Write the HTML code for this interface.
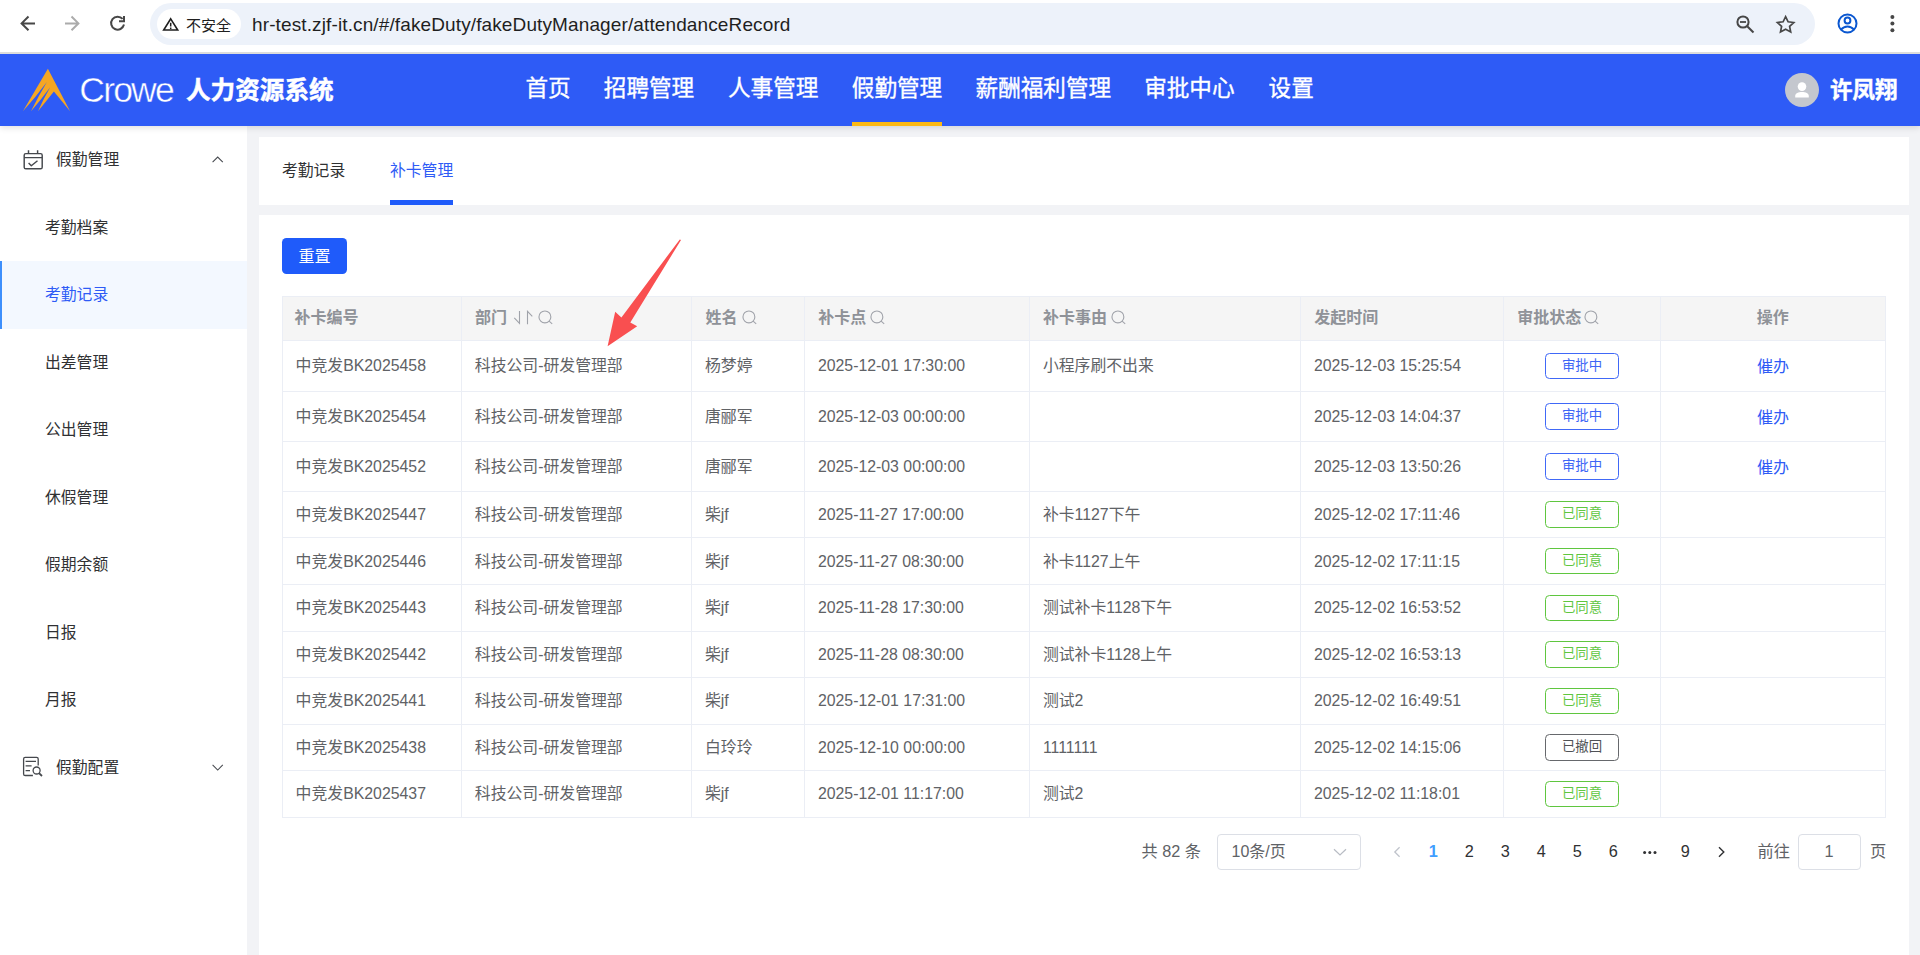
<!DOCTYPE html>
<html lang="zh-CN">
<head>
<meta charset="utf-8">
<title>人力资源系统</title>
<style>
*{box-sizing:border-box;margin:0;padding:0}
html,body{width:1920px;height:955px;overflow:hidden;background:#f2f3f6;font-family:"Liberation Sans","Noto Sans CJK SC",sans-serif;color:#303133}
.abs{position:absolute}
/* browser chrome */
#chrome{position:absolute;left:0;top:0;width:1920px;height:54px;background:#fff;border-bottom:1px solid #e3e3e3}
#chrome .line{position:absolute;left:0;top:52px;width:1920px;height:2px;background:#dcdcdc}
#pill{position:absolute;left:150px;top:3px;width:1665px;height:42px;border-radius:21px;background:#edf2fa}
#chip{position:absolute;left:157px;top:9px;width:84px;height:30px;border-radius:15px;background:#fff}
#chip span{position:absolute;left:29px;top:7px;font-size:15px;line-height:20px;color:#1f1f1f;white-space:nowrap}
#url{position:absolute;left:252px;top:11.5px;letter-spacing:0.12px;font-size:19px;line-height:26px;color:#1f1f1f;white-space:nowrap}
/* header */
#hdr{position:absolute;left:0;top:54px;width:1920px;height:72px;background:#2e5bf6;box-shadow:0 2px 6px rgba(0,0,0,.12)}
#hdr .nav{position:absolute;top:20.3px;-webkit-text-stroke:0.35px #fff;font-size:22.6px;line-height:30px;color:#fff;white-space:nowrap}
#crowe{position:absolute;left:79.3px;top:14px;font-size:35.6px;-webkit-text-stroke:0.45px #2e5bf6;line-height:44px;color:#fff;letter-spacing:-1.85px;white-space:nowrap}
#sysname{position:absolute;left:186px;top:19.5px;-webkit-text-stroke:0.5px #fff;font-size:24.6px;line-height:34px;color:#fff;font-weight:bold;white-space:nowrap}
#uname{position:absolute;left:1830px;top:20.5px;-webkit-text-stroke:0.45px #fff;font-size:22.5px;line-height:32px;color:#fff;font-weight:bold;white-space:nowrap}
#avatar{position:absolute;left:1785px;top:19px;width:34px;height:34px;border-radius:50%;background:#c4c7ce}
#navline{position:absolute;left:852px;top:68px;width:90px;height:4px;background:#fdb913}
/* sidebar */
#side{position:absolute;left:0;top:126px;width:247px;height:829px;background:#fff}
#side .it{position:absolute;left:0;width:247px;height:67.5px;line-height:67.5px;font-size:15.8px;color:#303133;white-space:nowrap}
#side .it span{position:absolute;left:45px;top:-0.2px}
#side .it.top span{left:56px}
#side .act{background:#f3f8ff;color:#2e5bf6 !important;border-left:2px solid #3d8ffc}
#side .act span{left:43px !important}
/* main */
.card{position:absolute;background:#fff}
.tab{position:absolute;top:23px;font-size:15.8px;line-height:22px;white-space:nowrap}
#btn{position:absolute;left:282px;top:238px;width:65px;height:36px;border-radius:4.5px;background:#1f5bfa;color:#fff;font-size:16px;line-height:37.2px;text-align:center}
/* table */
#tbl{position:absolute;left:282px;top:296px;width:1604px;height:521.5px;border:1px solid #ebeef5;background:#fff}
.hd{position:absolute;left:0;top:0;width:1602px;height:43.5px;background:#f5f5f5}
.vl{position:absolute;top:0;width:1px;height:520px;background:#ebeef5}
.hl{position:absolute;left:0;width:1602px;height:1px;background:#ebeef5}
.th{position:absolute;top:10px;font-size:16px;line-height:22px;font-weight:bold;color:#8f9298;white-space:nowrap}
.td{position:absolute;font-size:15.85px;line-height:22px;color:#606266;white-space:nowrap}
.tag{position:absolute;left:1545px;width:74px;height:26.5px;border-radius:4.5px;border:1.3px solid #4068f7;color:#3d65f6;font-size:13.4px;line-height:24.6px;text-align:center;background:#fff}
.tag.g{border-color:#5fc63f;color:#5fc63f}
.tag.k{border-color:#66686c;color:#505256}
.lnk{position:absolute;left:1757px;font-size:16px;line-height:22px;color:#2e5bf6;white-space:nowrap}
/* pagination */
.pg{position:absolute;top:839.2px;font-size:16.25px;line-height:24px;color:#303133;white-space:nowrap}
.pn{width:36px;text-align:center}
.box{position:absolute;top:834px;height:35.5px;border:1px solid #dcdfe6;border-radius:4px;background:#fff}
.ic{display:inline-block;vertical-align:-2px;margin-left:5px;position:relative;left:0.6px;top:1.3px}

</style>
</head>
<body>
<div id="side">
<div class="it top" style="top:0.25px"><span>假勤管理</span></div>
<div class="it " style="top:67.75px"><span>考勤档案</span></div>
<div class="it act" style="top:135.25px"><span>考勤记录</span></div>
<div class="it " style="top:202.75px"><span>出差管理</span></div>
<div class="it " style="top:270.25px"><span>公出管理</span></div>
<div class="it " style="top:337.75px"><span>休假管理</span></div>
<div class="it " style="top:405.25px"><span>假期余额</span></div>
<div class="it " style="top:472.75px"><span>日报</span></div>
<div class="it " style="top:540.25px"><span>月报</span></div>
<div class="it top" style="top:607.75px"><span>假勤配置</span></div>
<svg class="abs" style="left:20px;top:20px" width="26" height="26" viewBox="20 146 26 26">
 <g fill="none" stroke="#45484d" stroke-width="1.45" stroke-linejoin="round" stroke-linecap="butt">
  <rect x="24.2" y="153.6" width="18" height="15.2" rx="1.6"/>
  <path d="M24.2 157.6H42.2M28.5 150.3V153.6M37.6 150.3V153.6M28.6 163L31.3 165.7L37.5 160.8"/>
 </g>
</svg>
<svg class="abs" style="left:208px;top:26px" width="20" height="14" viewBox="208 152 20 14"><path d="M212.6 162.2L217.7 157.1L222.8 162.2" fill="none" stroke="#46494f" stroke-width="1.05"/></svg>
<svg class="abs" style="left:20px;top:628px" width="26" height="26" viewBox="20 754 26 26">
 <g fill="none" stroke="#45484d" stroke-width="1.3" stroke-linejoin="round" stroke-linecap="butt">
  <path d="M32.9 775.5H25.2Q23.6 775.5 23.6 773.9V759Q23.6 757.4 25.2 757.4H36.6Q38.2 757.4 38.2 759V765.4"/>
  <path d="M25.6 761.3H36M25.6 765.8H31.6M25.6 770.6H30"/>
  <circle cx="36.6" cy="770.5" r="3.5"/><path d="M39 773.2L42 776" stroke-width="1.8"/>
 </g>
</svg>
<svg class="abs" style="left:208px;top:634px" width="20" height="14" viewBox="208 760 20 14"><path d="M212.6 764.9L217.7 770L222.8 764.9" fill="none" stroke="#46494f" stroke-width="1.05"/></svg>
</div>


<div class="card" style="left:259px;top:137px;width:1650px;height:67.5px">
 <div class="tab" style="left:23px;color:#303133">考勤记录</div>
 <div class="tab" style="left:131px;color:#2e5bf6">补卡管理</div>
 <div class="abs" style="left:131px;top:63px;width:63.3px;height:4.8px;background:#1f5bfa"></div>
</div>
<div class="card" style="left:259px;top:215px;width:1650px;height:740px"></div>
<div id="btn">重置</div>

<div id="tbl">
<div class="hd"></div>
<div class="vl" style="left:178.2px"></div><div class="vl" style="left:408.4px"></div><div class="vl" style="left:521.3px"></div><div class="vl" style="left:746.3px"></div><div class="vl" style="left:1017.4px"></div><div class="vl" style="left:1220.3px"></div><div class="vl" style="left:1377.3px"></div>
<div class="hl" style="top:43.0px"></div><div class="hl" style="top:94.0px"></div><div class="hl" style="top:144.0px"></div><div class="hl" style="top:194.0px"></div><div class="hl" style="top:240.0px"></div><div class="hl" style="top:287.0px"></div><div class="hl" style="top:334.0px"></div><div class="hl" style="top:380.0px"></div><div class="hl" style="top:427.0px"></div><div class="hl" style="top:473.0px"></div>
<div class="th" style="left:11.6px">补卡编号</div><div class="th" style="left:192.1px">部门</div><div class="th" style="left:422.6px">姓名</div><div class="th" style="left:535.3px">补卡点</div><div class="th" style="left:760.1px">补卡事由</div><div class="th" style="left:1031.3px">发起时间</div><div class="th" style="left:1234.2px">审批状态</div><svg class="abs" style="left:229.0px;top:13.1px" width="21" height="16" viewBox="0 0 21 16"><g fill="none" stroke="#a0a3aa" stroke-width="1.1"><path d="M7.5 0.9V13.3L2.3 7.9"/><path d="M15.5 14.3V1.3L20.3 6.3"/></g></svg><svg class="abs" style="left:254.5px;top:13.0px" width="16" height="16" viewBox="0 0 16 16"><circle cx="6.9" cy="6.9" r="5.95" fill="none" stroke="#a0a3aa" stroke-width="1.1"/><path d="M11.1 11.1L14.2 13.9" stroke="#a0a3aa" stroke-width="1.1"/></svg><svg class="abs" style="left:458.5px;top:13.0px" width="16" height="16" viewBox="0 0 16 16"><circle cx="6.9" cy="6.9" r="5.95" fill="none" stroke="#a0a3aa" stroke-width="1.1"/><path d="M11.1 11.1L14.2 13.9" stroke="#a0a3aa" stroke-width="1.1"/></svg><svg class="abs" style="left:586.8px;top:13.0px" width="16" height="16" viewBox="0 0 16 16"><circle cx="6.9" cy="6.9" r="5.95" fill="none" stroke="#a0a3aa" stroke-width="1.1"/><path d="M11.1 11.1L14.2 13.9" stroke="#a0a3aa" stroke-width="1.1"/></svg><svg class="abs" style="left:827.6px;top:13.0px" width="16" height="16" viewBox="0 0 16 16"><circle cx="6.9" cy="6.9" r="5.95" fill="none" stroke="#a0a3aa" stroke-width="1.1"/><path d="M11.1 11.1L14.2 13.9" stroke="#a0a3aa" stroke-width="1.1"/></svg><svg class="abs" style="left:1300.7px;top:13.0px" width="16" height="16" viewBox="0 0 16 16"><circle cx="6.9" cy="6.9" r="5.95" fill="none" stroke="#a0a3aa" stroke-width="1.1"/><path d="M11.1 11.1L14.2 13.9" stroke="#a0a3aa" stroke-width="1.1"/></svg><div class="th" style="left:1377.3px;width:225px;text-align:center">操作</div>
<div class="td" style="left:12.6px;top:58.3px">中竞发BK2025458</div><div class="td" style="left:191.8px;top:58.3px">科技公司-研发管理部</div><div class="td" style="left:422.0px;top:58.3px">杨梦婷</div><div class="td" style="left:534.9px;top:58.3px">2025-12-01 17:30:00</div><div class="td" style="left:759.9px;top:58.3px">小程序刷不出来</div><div class="td" style="left:1031.0px;top:58.3px">2025-12-03 15:25:54</div><div class="tag " style="left:1262.0px;top:55.6px">审批中</div><div class="lnk" style="left:1474.0px;top:59.3px">催办</div>
<div class="td" style="left:12.6px;top:108.8px">中竞发BK2025454</div><div class="td" style="left:191.8px;top:108.8px">科技公司-研发管理部</div><div class="td" style="left:422.0px;top:108.8px">唐郦军</div><div class="td" style="left:534.9px;top:108.8px">2025-12-03 00:00:00</div><div class="td" style="left:1031.0px;top:108.8px">2025-12-03 14:04:37</div><div class="tag " style="left:1262.0px;top:106.0px">审批中</div><div class="lnk" style="left:1474.0px;top:109.8px">催办</div>
<div class="td" style="left:12.6px;top:158.9px">中竞发BK2025452</div><div class="td" style="left:191.8px;top:158.9px">科技公司-研发管理部</div><div class="td" style="left:422.0px;top:158.9px">唐郦军</div><div class="td" style="left:534.9px;top:158.9px">2025-12-03 00:00:00</div><div class="td" style="left:1031.0px;top:158.9px">2025-12-03 13:50:26</div><div class="tag " style="left:1262.0px;top:156.1px">审批中</div><div class="lnk" style="left:1474.0px;top:159.9px">催办</div>
<div class="td" style="left:12.6px;top:207.2px">中竞发BK2025447</div><div class="td" style="left:191.8px;top:207.2px">科技公司-研发管理部</div><div class="td" style="left:422.0px;top:207.2px">柴jf</div><div class="td" style="left:534.9px;top:207.2px">2025-11-27 17:00:00</div><div class="td" style="left:759.9px;top:207.2px">补卡1127下午</div><div class="td" style="left:1031.0px;top:207.2px">2025-12-02 17:11:46</div><div class="tag g" style="left:1262.0px;top:204.4px">已同意</div>
<div class="td" style="left:12.6px;top:253.7px">中竞发BK2025446</div><div class="td" style="left:191.8px;top:253.7px">科技公司-研发管理部</div><div class="td" style="left:422.0px;top:253.7px">柴jf</div><div class="td" style="left:534.9px;top:253.7px">2025-11-27 08:30:00</div><div class="td" style="left:759.9px;top:253.7px">补卡1127上午</div><div class="td" style="left:1031.0px;top:253.7px">2025-12-02 17:11:15</div><div class="tag g" style="left:1262.0px;top:250.9px">已同意</div>
<div class="td" style="left:12.6px;top:300.2px">中竞发BK2025443</div><div class="td" style="left:191.8px;top:300.2px">科技公司-研发管理部</div><div class="td" style="left:422.0px;top:300.2px">柴jf</div><div class="td" style="left:534.9px;top:300.2px">2025-11-28 17:30:00</div><div class="td" style="left:759.9px;top:300.2px">测试补卡1128下午</div><div class="td" style="left:1031.0px;top:300.2px">2025-12-02 16:53:52</div><div class="tag g" style="left:1262.0px;top:297.5px">已同意</div>
<div class="td" style="left:12.6px;top:346.8px">中竞发BK2025442</div><div class="td" style="left:191.8px;top:346.8px">科技公司-研发管理部</div><div class="td" style="left:422.0px;top:346.8px">柴jf</div><div class="td" style="left:534.9px;top:346.8px">2025-11-28 08:30:00</div><div class="td" style="left:759.9px;top:346.8px">测试补卡1128上午</div><div class="td" style="left:1031.0px;top:346.8px">2025-12-02 16:53:13</div><div class="tag g" style="left:1262.0px;top:344.0px">已同意</div>
<div class="td" style="left:12.6px;top:393.3px">中竞发BK2025441</div><div class="td" style="left:191.8px;top:393.3px">科技公司-研发管理部</div><div class="td" style="left:422.0px;top:393.3px">柴jf</div><div class="td" style="left:534.9px;top:393.3px">2025-12-01 17:31:00</div><div class="td" style="left:759.9px;top:393.3px">测试2</div><div class="td" style="left:1031.0px;top:393.3px">2025-12-02 16:49:51</div><div class="tag g" style="left:1262.0px;top:390.6px">已同意</div>
<div class="td" style="left:12.6px;top:439.9px">中竞发BK2025438</div><div class="td" style="left:191.8px;top:439.9px">科技公司-研发管理部</div><div class="td" style="left:422.0px;top:439.9px">白玲玲</div><div class="td" style="left:534.9px;top:439.9px">2025-12-10 00:00:00</div><div class="td" style="left:759.9px;top:439.9px">1111111</div><div class="td" style="left:1031.0px;top:439.9px">2025-12-02 14:15:06</div><div class="tag k" style="left:1262.0px;top:437.1px">已撤回</div>
<div class="td" style="left:12.6px;top:486.4px">中竞发BK2025437</div><div class="td" style="left:191.8px;top:486.4px">科技公司-研发管理部</div><div class="td" style="left:422.0px;top:486.4px">柴jf</div><div class="td" style="left:534.9px;top:486.4px">2025-12-01 11:17:00</div><div class="td" style="left:759.9px;top:486.4px">测试2</div><div class="td" style="left:1031.0px;top:486.4px">2025-12-02 11:18:01</div><div class="tag g" style="left:1262.0px;top:483.7px">已同意</div>
</div>

<svg class="abs" style="left:600px;top:232px" width="90" height="120" viewBox="600 232 90 120"><path d="M679.8 239.4L681 240L630.3 322.4L637.2 326.2L607.6 346.3L615.2 311.8L621.4 317.4Z" fill="#f94f50"/></svg>

<div class="pg" style="left:1141.5px;color:#606266">共 82 条</div>
<div class="box" style="left:1217px;width:144px"></div><div class="pg" style="left:1231.5px;color:#606266;font-size:16px;top:840px">10条/页</div>
<svg class="abs" style="left:1330px;top:845px" width="20" height="14" viewBox="0 0 20 14"><path d="M4 4.2L10 10L16 4.2" fill="none" stroke="#b8bcc4" stroke-width="1.2"/></svg>
<svg class="abs" style="left:1390px;top:844px" width="14" height="16" viewBox="0 0 14 16"><path d="M9.6 3.2L4.8 8L9.6 12.8" fill="none" stroke="#c0c4cc" stroke-width="1.3"/></svg>
<svg class="abs" style="left:1714px;top:844px" width="14" height="16" viewBox="0 0 14 16"><path d="M5 3.2L9.8 8L5 12.8" fill="none" stroke="#303133" stroke-width="1.4"/></svg>
<div class="pg pn" style="left:1415.3px;color:#409eff;font-weight:bold;">1</div><div class="pg pn" style="left:1451.2px;">2</div><div class="pg pn" style="left:1487.2px;">3</div><div class="pg pn" style="left:1523.2px;">4</div><div class="pg pn" style="left:1559.2px;">5</div><div class="pg pn" style="left:1595.2px;">6</div><div class="pg pn" style="left:1667.2px;">9</div>
<svg class="abs" style="left:1640px;top:846px" width="20" height="12" viewBox="0 0 20 12"><g fill="#303133"><circle cx="4.6" cy="6.4" r="1.5"/><circle cx="9.8" cy="6.4" r="1.5"/><circle cx="15" cy="6.4" r="1.5"/></g></svg>
<div class="pg" style="left:1757.5px;color:#606266">前往</div><div class="box" style="left:1798px;width:62.5px"></div><div class="pg pn" style="left:1811px;color:#606266">1</div><div class="pg" style="left:1870px;color:#606266">页</div>

<div id="hdr">
<svg class="abs" style="left:20px;top:12px" width="56" height="48" viewBox="20 66 56 48">
 <g fill="#f5a623">
  <path d="M47.9 68.8L70.1 111.2L53.9 91.5L38 111.2Q43.7 98.4 50.2 87.3Q41.3 99.6 31 111.2Q38.6 95.5 46.9 81.9Q35.8 97 22.9 111.2Z"/>
 </g>
</svg>
<div id="crowe">Crowe</div><div id="sysname">人力资源系统</div>
<div class="nav" style="left:525.4px">首页</div><div class="nav" style="left:603.8px">招聘管理</div><div class="nav" style="left:728.0px">人事管理</div><div class="nav" style="left:851.8px">假勤管理</div><div class="nav" style="left:975.6px">薪酬福利管理</div><div class="nav" style="left:1144.2px">审批中心</div><div class="nav" style="left:1268.6px">设置</div>
<div id="navline"></div>
<div id="avatar"><svg width="34" height="34" viewBox="0 0 34 34"><circle cx="17" cy="13.6" r="4.3" fill="#fff"/><path d="M10.2 24.4V23C10.2 20 13.4 18.9 17 18.9C20.6 18.9 23.8 20 23.8 23V24.4Z" fill="#fff"/></svg></div><div id="uname">许凤翔</div>
</div>


<div id="chrome">
<div class="line"></div>
<svg class="abs" style="left:0;top:0" width="150" height="52" viewBox="0 0 150 52">
 <g fill="none" stroke="#474747" stroke-width="2" stroke-linecap="butt" stroke-linejoin="miter">
  <path d="M35 23.4H21.6M28.5 16.5L21.6 23.4L28.5 30.3"/>
  <path d="M65 23.4H78.4M71.5 16.5L78.4 23.4L71.5 30.3" stroke="#ababab"/>
  <path d="M122.6 18.9A6.5 6.5 0 1 0 124 24.6"/>
  <path d="M124 16V21.2H119"/>
 </g>
</svg>
<div id="pill"></div>
<div id="chip"><svg class="abs" style="left:4px;top:7px" width="20" height="16" viewBox="0 0 20 16"><path d="M9.7 2.8L16.7 14H2.7Z" fill="none" stroke="#1f1f1f" stroke-width="1.6" stroke-linejoin="miter"/><path d="M9.7 6.8V10.4M9.7 11.5V13" stroke="#1f1f1f" stroke-width="1.5"/></svg><span>不安全</span></div>
<div id="url">hr-test.zjf-it.cn/#/fakeDuty/fakeDutyManager/attendanceRecord</div>
<svg class="abs" style="left:1730px;top:10px" width="180" height="30" viewBox="0 0 180 30">
 <g fill="none" stroke="#474747" stroke-width="2">
  <circle cx="13" cy="12" r="5.6"/><path d="M17.2 16.2L23.5 22.5" stroke-linecap="butt"/><path d="M10 12H16" stroke-width="1.8"/>
  <path d="M55.6 6.6L58.1 11.8L63.8 12.5L59.6 16.4L60.7 22L55.6 19.2L50.5 22L51.6 16.4L47.4 12.5L53.1 11.8Z" stroke-width="1.7" stroke-linejoin="miter"/>
 </g>
 <g fill="none" stroke="#0b57d0" stroke-width="2">
  <circle cx="117.5" cy="13.5" r="9"/><circle cx="117.5" cy="10.5" r="2.9"/>
  <path d="M111 19.6C113 17.2 115.3 16.4 117.5 16.4C119.7 16.4 122 17.2 124 19.6"/>
 </g>
 <g fill="#474747"><circle cx="162.4" cy="7" r="2"/><circle cx="162.4" cy="13.5" r="2"/><circle cx="162.4" cy="20.2" r="2"/></g>
</svg>
</div>

</body>
</html>
